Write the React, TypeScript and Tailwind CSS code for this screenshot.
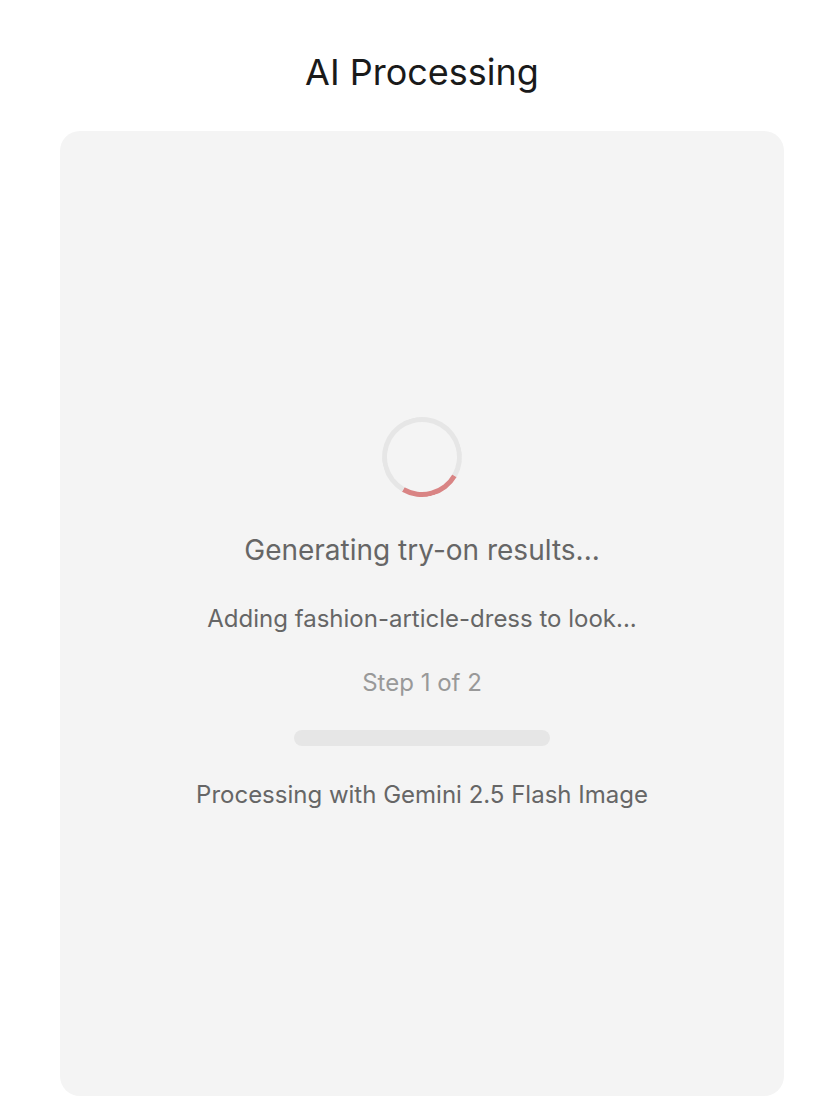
export default function App() {
  return (
    <div
      className="min-h-screen bg-white pl-[60px] pr-[50px] pt-[48px] pb-[10px]"
      style={{ fontFamily: "Inter, 'Noto Sans', sans-serif" }}
    >
      <h1 className="text-center text-[36px] leading-[48px] font-normal text-[#1a1a1a]">
        AI Processing
      </h1>
      <div className="mt-[35px] flex h-[965px] flex-col items-center justify-center rounded-[20px] bg-[#f4f4f4]">
        {/* spinner */}
        <div className="h-[80px] w-[80px] -rotate-[15deg] rounded-full border-[5px] border-[#e6e6e6] border-b-[#d98484]" />
        <p className="mt-[35px] text-[28px] leading-[36px] text-[#666666]">
          Generating try-on results...
        </p>
        <p className="mt-[35px] text-[24px] leading-[32px] text-[#666666]">
          Adding fashion-article-dress to look...
        </p>
        <p className="mt-[32px] text-[24px] leading-[32px] text-[#999999]">
          Step 1 of 2
        </p>
        <div className="mt-[31px] h-[16px] w-[256px] rounded-full bg-[#e6e6e6]" />
        <p className="mt-[33px] text-[24px] leading-[32px] text-[#666666]">
          Processing with Gemini 2.5 Flash Image
        </p>
      </div>
    </div>
  );
}
